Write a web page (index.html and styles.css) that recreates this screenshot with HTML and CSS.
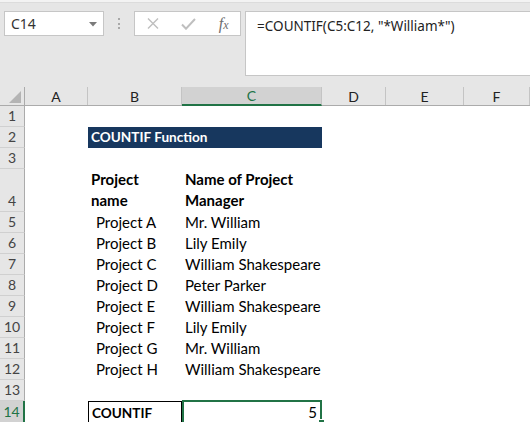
FILE: index.html
```html
<!DOCTYPE html>
<html>
<head>
<meta charset="utf-8">
<link rel="stylesheet" href="styles.css">
</head>
<body>
<div class="app">
  <div class="topstrip"></div>
  <div class="toolbar">
    <div class="namebox">
      <span class="nb-text">C14</span>
      <svg class="nb-arrow" width="8" height="5" viewBox="0 0 8 5"><path d="M0 0h8L4 4.5z" fill="#7a7a7a"/></svg>
    </div>
    <div class="grip"><span></span><span></span><span></span></div>
    <div class="fbuttons">
      <svg class="ic-x" width="12" height="11" viewBox="0 0 12 11"><path d="M1 0.5l10 10M11 0.5l-10 10" stroke="#bfbfbf" stroke-width="1.4" fill="none"/></svg>
      <svg class="ic-check" width="15" height="12" viewBox="0 0 15 12"><path d="M1 6.5l4 4.2L14 1" stroke="#bfbfbf" stroke-width="2" fill="none"/></svg>
      <span class="fx">f<span class="fx-x">x</span></span>
    </div>
    <div class="formula">=COUNTIF(C5:C12, "*William*")</div>
  </div>
  <div class="sheet">
    <div class="row hdr">
      <div class="corner"><svg width="12" height="12" viewBox="0 0 12 12"><path d="M12 0V12H0z" fill="#b4b4b4"/></svg></div>
      <div class="ch">A</div>
      <div class="ch">B</div>
      <div class="ch sel">C</div>
      <div class="ch">D</div>
      <div class="ch">E</div>
      <div class="ch">F</div>
    </div>
    <div class="row"><div class="rh">1</div><div class="c"></div><div class="c"></div><div class="c"></div><div class="c"></div><div class="c"></div><div class="c"></div></div>
    <div class="row"><div class="rh">2</div><div class="c"></div><div class="c title">COUNTIF Function</div><div class="c"></div><div class="c"></div><div class="c"></div></div>
    <div class="row"><div class="rh">3</div><div class="c"></div><div class="c"></div><div class="c"></div><div class="c"></div><div class="c"></div><div class="c"></div></div>
    <div class="row tall"><div class="rh">4</div><div class="c"></div><div class="c bold">Project<br>name</div><div class="c bold">Name of Project<br>Manager</div><div class="c"></div><div class="c"></div><div class="c"></div></div>
    <div class="row"><div class="rh">5</div><div class="c"></div><div class="c ind">Project A</div><div class="c">Mr. William</div><div class="c"></div><div class="c"></div><div class="c"></div></div>
    <div class="row"><div class="rh">6</div><div class="c"></div><div class="c ind">Project B</div><div class="c">Lily Emily</div><div class="c"></div><div class="c"></div><div class="c"></div></div>
    <div class="row"><div class="rh">7</div><div class="c"></div><div class="c ind">Project C</div><div class="c">William Shakespeare</div><div class="c"></div><div class="c"></div><div class="c"></div></div>
    <div class="row"><div class="rh">8</div><div class="c"></div><div class="c ind">Project D</div><div class="c">Peter Parker</div><div class="c"></div><div class="c"></div><div class="c"></div></div>
    <div class="row"><div class="rh">9</div><div class="c"></div><div class="c ind">Project E</div><div class="c">William Shakespeare</div><div class="c"></div><div class="c"></div><div class="c"></div></div>
    <div class="row"><div class="rh">10</div><div class="c"></div><div class="c ind">Project F</div><div class="c">Lily Emily</div><div class="c"></div><div class="c"></div><div class="c"></div></div>
    <div class="row"><div class="rh">11</div><div class="c"></div><div class="c ind">Project G</div><div class="c">Mr. William</div><div class="c"></div><div class="c"></div><div class="c"></div></div>
    <div class="row"><div class="rh">12</div><div class="c"></div><div class="c ind">Project H</div><div class="c">William Shakespeare</div><div class="c"></div><div class="c"></div><div class="c"></div></div>
    <div class="row"><div class="rh">13</div><div class="c"></div><div class="c"></div><div class="c"></div><div class="c"></div><div class="c"></div><div class="c"></div></div>
    <div class="row"><div class="rh sel">14</div><div class="c"></div><div class="c bold boxed">COUNTIF</div><div class="c num active">5<span class="handle"></span></div><div class="c"></div><div class="c"></div><div class="c"></div></div>
  </div>
</div>
</body>
</html>
```

FILE: styles.css
```css
* { box-sizing: border-box; }
html, body { margin: 0; padding: 0; }
body {
  width: 530px;
  height: 422px;
  overflow: hidden;
  background: #ffffff;
  font-family: "Lato", "Liberation Sans", sans-serif;
}
.app { width: 530px; }

.topstrip {
  height: 3px;
  background: #f3f3f3;
  border-bottom: 1px solid #dcdcdc;
}
.toolbar {
  height: 84px;
  background: #e6e6e6;
  display: flex;
  align-items: flex-start;
  padding: 8px 0 0 4px;
}
.namebox {
  width: 102px;
  height: 25px;
  background: #fff;
  border: 1px solid #c6c6c6;
  display: flex;
  align-items: center;
  justify-content: space-between;
  padding: 0 6px 0 6px;
}
.nb-text {
  font-family: "Noto Sans", "Open Sans", sans-serif;
  font-size: 14px;
  color: #333;
}
.nb-arrow { margin-top: 1px; }
.grip {
  width: 30px;
  height: 25px;
  display: flex;
  flex-direction: column;
  align-items: center;
  justify-content: center;
  gap: 2.5px;
}
.grip span {
  width: 2px;
  height: 2px;
  background: #a8a8a8;
}
.fbuttons {
  width: 109px;
  height: 25px;
  background: #fff;
  border: 1px solid #c6c6c6;
  display: flex;
  align-items: center;
  padding-left: 12px;
}
.ic-x { margin-right: 22px; }
.ic-check { margin-right: 23px; }
.fx {
  font-family: "Liberation Serif", serif;
  font-style: italic;
  font-size: 16px;
  color: #6e6e6e;
  line-height: 1;
}
.fx-x { font-size: 12px; }
.formula {
  margin-left: 4px;
  width: 290px;
  height: 65px;
  background: #fff;
  border: 1px solid #c6c6c6;
  border-right: none;
  padding: 5px 0 0 11px;
  font-family: "Noto Sans", "Open Sans", sans-serif;
  font-size: 13.5px;
  color: #222;
  white-space: nowrap;
}

.sheet { width: 530px; }
.row {
  display: grid;
  grid-template-columns: 25px 63px 94px 140px 64px 78px 66px;
  height: 21px;
}
.row.tall { height: 43px; }
.row.hdr {
  height: 19px;
  background: #e6e6e6;
  border-bottom: 1px solid #ababab;
}
.corner {
  border-right: 1px solid #ababab;
  display: flex;
  align-items: flex-end;
  justify-content: flex-end;
  padding: 0 3px 2px 0;
}
.ch {
  border-right: 1px solid #c4c4c4;
  display: flex;
  align-items: center;
  justify-content: center;
  font-size: 14px;
  color: #222;
}
.ch.sel {
  background: #d2d2d2;
  color: #217346;
  border-bottom: 2px solid #217346;
  margin-bottom: -1px;
}
.rh {
  background: #e6e6e6;
  border-right: 1px solid #ababab;
  border-bottom: 1px solid #d0d0d0;
  display: flex;
  align-items: flex-end;
  justify-content: center;
  padding-bottom: 1px;
  font-size: 14px;
  line-height: 19px;
  color: #444;
}
.rh.sel {
  background: #d2d2d2;
  color: #217346;
  border-right: 2px solid #217346;
}
.c {
  padding-left: 3px;
  font-size: 15px;
  line-height: 21px;
  color: #000;
  white-space: nowrap;
  display: flex;
  flex-direction: column;
  justify-content: flex-end;
}
.tall .c { line-height: 21px; padding-bottom: 1px; }
.c.ind { padding-left: 8px; }
.c.bold { font-weight: 700; }
.c.title {
  grid-column: span 2;
  background: #17375e;
  color: #fff;
  font-weight: 700;
  font-size: 13.6px;
  justify-content: center;
}
.c.boxed {
  border: 1px solid #000;
  border-bottom: none;
  line-height: 20px;
  font-size: 13.6px;
}
.c.num {
  align-items: flex-end;
  padding-right: 3px;
  position: relative;
}
.c.active {
  border: 2px solid #217346;
  border-bottom: none;
  margin-top: -1px;
}
.handle {
  position: absolute;
  right: -4px;
  bottom: -2px;
  width: 6px;
  height: 6px;
  background: #217346;
  border-left: 1px solid #fff;
  border-top: 1px solid #fff;
}
```
